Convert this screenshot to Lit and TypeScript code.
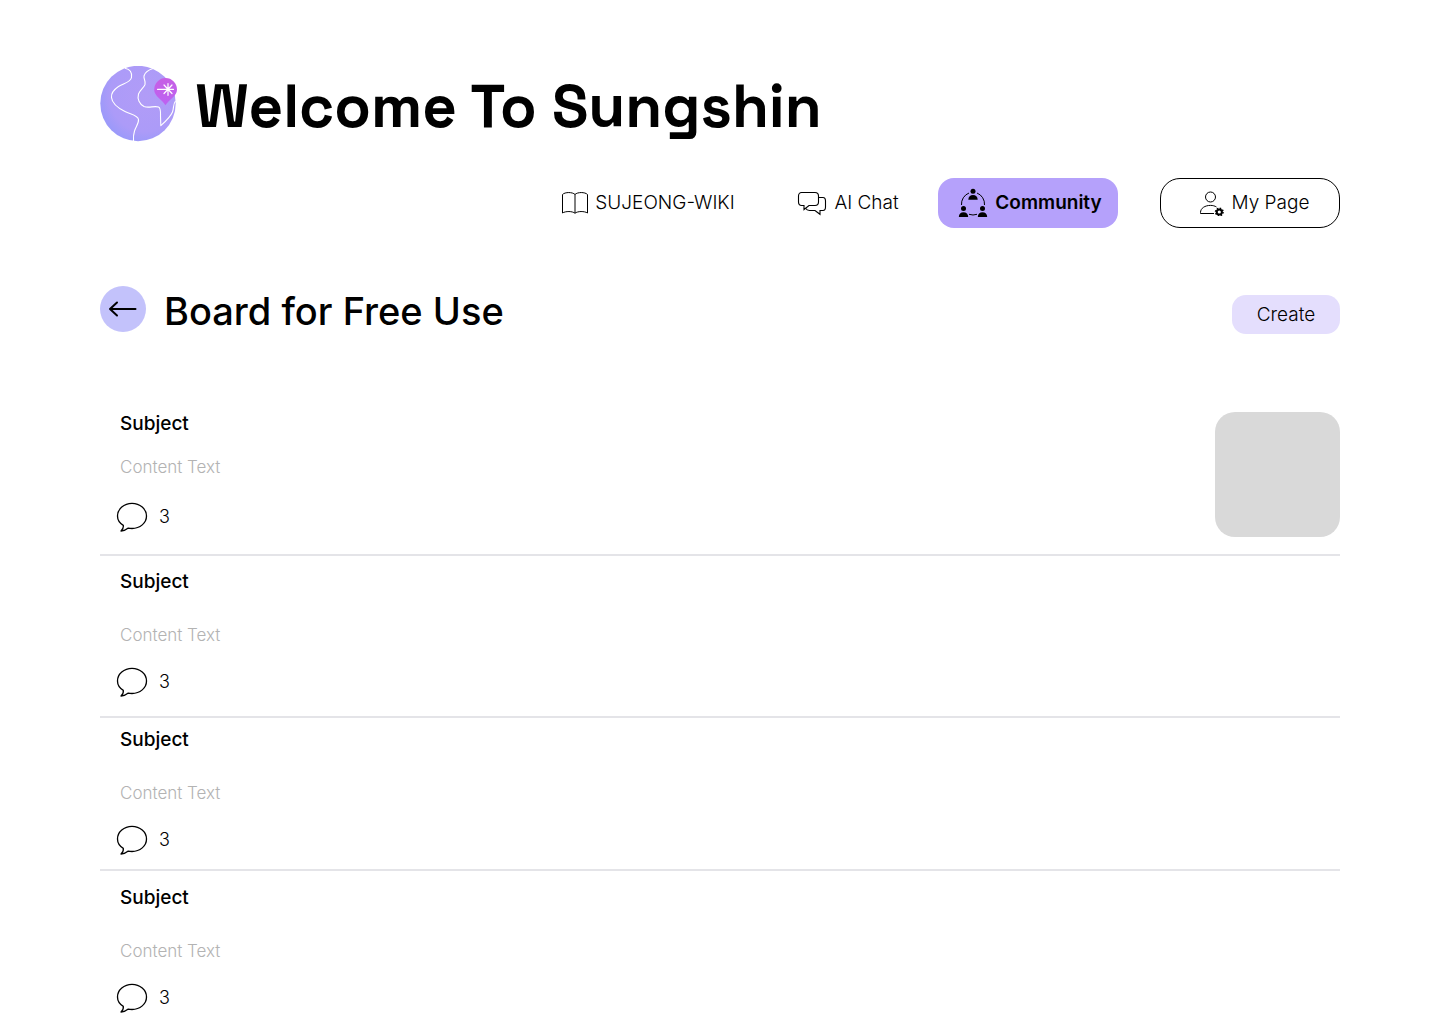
import { LitElement, html, css, svg } from "lit";
import { customElement } from "lit/decorators.js";
import { classMap } from "lit/directives/class-map.js";

interface Post {
  subject: string;
  content: string;
  comments: number;
  picture: boolean;
}

const POSTS: Post[] = [
  { subject: "Subject", content: "Content Text", comments: 3, picture: true },
  { subject: "Subject", content: "Content Text", comments: 3, picture: false },
  { subject: "Subject", content: "Content Text", comments: 3, picture: false },
  { subject: "Subject", content: "Content Text", comments: 3, picture: false },
];

const logo = html`
  <svg class="logo" viewBox="0 0 78 76" width="78" height="76" aria-hidden="true">
    <defs>
      <radialGradient id="globe" cx="0.6" cy="0.4" r="0.68">
        <stop offset="0" stop-color="#b19cf7" />
        <stop offset="0.7" stop-color="#ac9bf8" />
        <stop offset="1" stop-color="#9699fa" />
      </radialGradient>
      <linearGradient id="pin" x1="0" y1="0" x2="0" y2="1">
        <stop offset="0" stop-color="#c65fe4" />
        <stop offset="1" stop-color="#bd62f2" />
      </linearGradient>
    </defs>
    <circle cx="38" cy="37.5" r="37.7" fill="url(#globe)" />
    <g fill="none" stroke="#fff" stroke-width="1.1" stroke-linejoin="round">
      <path d="M25 2.3C31 3.500 32 8 31.500 11.500C30.500 16.500 24 17 18.500 20.500C14 23.500 11 27 11.500 31.500C12 37 18 42 25 45.500C31 48.500 38 49.500 38.500 53.500C39 57.500 35.500 61 34.500 65C33.500 68 33.300 72 33.500 75" />
      <path d="M53 2.500C48 4 45 6 44 10C43.400 13 46 15 45 18.500C44 21.500 40 24 38.500 28C37 33 39.500 38 44 40.500C49 42.500 54 39.500 58.500 41C61 42 60.500 46 60.500 50L60.800 59.700C66 55 70.500 51 72.500 46C74 42 73 38 75.500 35" />
    </g>
    <path d="M65.500 39.300C62 33.500 54.200 30.500 54.200 23.500A11.400 11.400 0 0 1 77 23.500C77 30.500 69 33.500 65.500 39.300Z" fill="url(#pin)" />
    <g stroke="#fff" stroke-width="1.200" stroke-linecap="round">
      <path d="M57.500 23.300H73.500M68 17.500V29.300M64 19L72 27.500M72 19L64 27.500" />
    </g>
  </svg>
`;

const bookIcon = svg`
  <svg viewBox="0 0 28 24" width="28" height="24" fill="none" stroke="#000" stroke-width="1" stroke-linejoin="round" aria-hidden="true">
    <path d="M14 3.500C11.500 .900 4 .900 1.500 3.500V22C4.500 20 11.500 20 14 22.300C16.500 20 23.500 20 26.500 22V3.500C24 .900 16.500 .900 14 3.500Z" />
    <path d="M14 3.500V22" />
  </svg>
`;

const chatIcon = svg`
  <svg viewBox="0 0 30 26" width="30" height="26" fill="none" stroke="#000" stroke-width="1.100" stroke-linejoin="miter" aria-hidden="true">
    <path d="M4.500 2.500H18C20.200 2.500 21.500 4 21.500 6V12C21.500 14.200 20.200 15.500 18 15.500H12L7 19.500V15.500H4.500C2.700 15.500 1.500 14.200 1.500 12V6C1.500 4 2.700 2.500 4.500 2.500Z" />
    <path d="M21.500 7.500H26C28 7.500 28.500 9 28.500 11V17C28.500 19 28 20.500 26 20.500H23V24.300L18 20.500H12.500C10.800 20.500 9.500 19.800 8.500 18.300" />
  </svg>
`;

const communityIcon = svg`
  <svg viewBox="0 0 30 30" width="30" height="30" aria-hidden="true">
    <g fill="#000">
      <circle cx="15" cy="3.200" r="2.500" />
      <path d="M10.300 11.700C10.300 8.500 12.300 6.900 15 6.900S19.700 8.500 19.700 11.700Z" />
      <circle cx="5.500" cy="20.400" r="2.500" />
      <path d="M.800 29C.800 25.800 2.800 24.200 5.500 24.200S10.200 25.800 10.200 29Z" />
      <circle cx="24.500" cy="20.400" r="2.500" />
      <path d="M19.800 29C19.800 25.800 21.800 24.200 24.500 24.200S29.200 25.800 29.200 29Z" />
    </g>
    <path d="M11 5A12 12 0 0 0 3.500 17M19 5A12 12 0 0 1 26.500 17M11 26.300Q15 27.700 19 26.300" fill="none" stroke="#000" stroke-width="1" />
  </svg>
`;

const profileIcon = svg`
  <svg viewBox="0 0 26 26" width="26" height="26" aria-hidden="true">
    <g fill="none" stroke="#000" stroke-width="1">
      <circle cx="11.500" cy="7" r="5" />
      <path d="M17.500 17C15.800 15.900 13.800 15.400 11.500 15.400C6 15.400 1.500 18.200 1.500 22.500V23.500H15" />
    </g>
    <circle cx="20.300" cy="22" r="2.600" fill="none" stroke="#000" stroke-width="2" />
    <circle cx="20.300" cy="22" r="3.700" fill="none" stroke="#000" stroke-width="1.600" stroke-dasharray="1.453 1.453" />
  </svg>
`;

const arrowIcon = svg`
  <svg viewBox="0 0 46 46" width="46" height="46" fill="none" stroke="#000" stroke-width="2" stroke-linecap="round" stroke-linejoin="round" aria-hidden="true">
    <path d="M35.500 23H10M17 16.500L10 23L17 29.500" />
  </svg>
`;

const commentIcon = svg`
  <svg viewBox="0 0 32 30" width="32" height="30" fill="none" stroke="#000" stroke-width="1.300" stroke-linejoin="round" aria-hidden="true">
    <path d="M7.300 23.400C3.600 21.100 1.500 17.700 1.500 14C1.500 7 8 1.400 16 1.400S30.500 7 30.500 14S24 26.500 16 26.500C14.700 26.500 13.500 26.400 12.300 26.100C10.200 27.900 7.800 28.900 5 29C6.800 27.500 7.600 25.500 7.300 23.400Z" />
  </svg>
`;

@customElement("post-row")
export class PostRow extends LitElement {
  static properties = { post: { attribute: false } };
  declare post: Post;

  static styles = css`
    :host {
      display: block;
    }
    .row {
      display: flex;
      justify-content: space-between;
      align-items: flex-start;
    }
    .body {
      display: flex;
      flex-direction: column;
      padding-left: 20px;
    }
    .subject {
      margin: 0;
      font-size: 19px;
      font-weight: 500;
      line-height: 24px;
    }
    .subject a {
      color: inherit;
      text-decoration: none;
    }
    .content {
      margin: 30px 0 21px;
      font-size: 17px;
      font-weight: 300;
      line-height: 22px;
      color: #b3b3b3;
    }
    .with-picture .content {
      margin: 20px 0 24px;
    }
    .comments {
      display: flex;
      align-items: center;
      gap: 11px;
      margin-left: -4px;
      font-size: 18px;
      font-weight: 300;
      line-height: 30px;
    }
    .comments svg {
      display: block;
    }
    .picture {
      width: 125px;
      height: 125px;
      border-radius: 20px;
      background: #d9d9d9;
    }
  `;

  render() {
    const { subject, content, comments, picture } = this.post;
    return html`
      <article class=${classMap({ row: true, "with-picture": picture })}>
        <div class="body">
          <h3 class="subject"><a href="#post">${subject}</a></h3>
          <p class="content">${content}</p>
          <div class="comments">${commentIcon}<span>${comments}</span></div>
        </div>
        ${picture ? html`<div class="picture"></div>` : null}
      </article>
    `;
  }
}

@customElement("app-root")
export class AppRoot extends LitElement {
  static styles = css`
    :host {
      display: block;
      box-sizing: border-box;
      padding: 66px 100px 10px;
      background: #fff;
      color: #000;
      font-family: Inter, "Liberation Sans", sans-serif;
    }
    .brand {
      display: flex;
      align-items: center;
      gap: 17px;
      height: 76px;
    }
    .logo {
      display: block;
      flex: none;
    }
    .title {
      margin: 0;
      padding-top: 6px;
      font-family: "Space Grotesk", Inter, sans-serif;
      font-size: 60px;
      font-weight: 700;
      line-height: 76px;
      white-space: nowrap;
    }
    .nav {
      display: flex;
      justify-content: flex-end;
      margin-top: 36px;
    }
    .tab {
      display: flex;
      align-items: center;
      justify-content: center;
      gap: 7px;
      box-sizing: border-box;
      width: 180px;
      height: 50px;
      border-radius: 16px;
      color: inherit;
      font-size: 19px;
      font-weight: 300;
      line-height: 24px;
      text-decoration: none;
      white-space: nowrap;
    }
    .wiki {
      margin-right: 20px;
      gap: 6px;
    }
    .community {
      padding-left: 4px;
      background: #b5a1fb;
      font-weight: 600;
    }
    .profile {
      margin-left: 42px;
      padding-left: 8px;
      border: 1px solid #000;
      border-radius: 20px;
    }
    .heading {
      display: flex;
      align-items: flex-start;
      margin-top: 58px;
    }
    .back {
      flex: none;
      width: 46px;
      height: 46px;
      padding: 0;
      border: 0;
      border-radius: 50%;
      background: #c3c2fb;
    }
    .back svg {
      display: block;
    }
    .board {
      margin: 0 auto 0 18px;
      padding-top: 2px;
      font-size: 38px;
      font-weight: 500;
      line-height: 46px;
    }
    .create {
      align-self: flex-end;
      width: 108px;
      height: 39px;
      padding: 0;
      border: 0;
      border-radius: 14px;
      background: #e4defd;
      color: inherit;
      font: 300 19px/24px Inter, "Liberation Sans", sans-serif;
    }
    .posts {
      margin: 78px 0 0;
      padding: 0;
      list-style: none;
    }
    .item {
      padding: 10px 0 14px;
      border-bottom: 2px solid #e4e4e8;
    }
    .item:first-child {
      padding: 0 0 17px;
    }
    .item:nth-child(2) {
      padding: 14px 0 19px;
    }
    .item:last-child {
      padding: 15px 0 0;
      border-bottom: 0;
    }
  `;

  render() {
    return html`
      <header>
        <div class="brand">
          ${logo}
          <h1 class="title">Welcome To Sungshin</h1>
        </div>
        <nav class="nav">
          <a class="tab wiki" href="#wiki">${bookIcon}SUJEONG-WIKI</a>
          <a class="tab" href="#chat">${chatIcon}AI Chat</a>
          <a class="tab community" href="#community" aria-current="page">${communityIcon}Community</a>
          <a class="tab profile" href="#profile">${profileIcon}My Page</a>
        </nav>
      </header>
      <main>
        <div class="heading">
          <button class="back" type="button" aria-label="Back">${arrowIcon}</button>
          <h2 class="board">Board for Free Use</h2>
          <button class="create" type="button">Create</button>
        </div>
        <ul class="posts">
          ${POSTS.map((post) => html`<li class="item"><post-row .post=${post}></post-row></li>`)}
        </ul>
      </main>
    `;
  }
}
